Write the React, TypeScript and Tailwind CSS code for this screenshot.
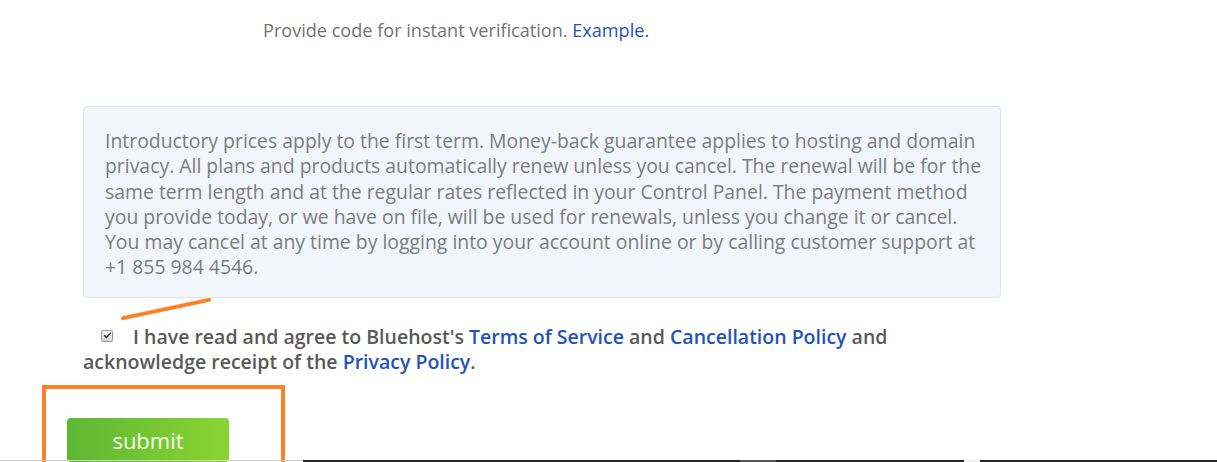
import { Check } from "lucide-react";

const link = "text-[#1f52bb]";

const terms = [
  "Introductory prices apply to the first term. Money-back guarantee applies to hosting and domain",
  "privacy. All plans and products automatically renew unless you cancel. The renewal will be for the",
  "same term length and at the regular rates reflected in your Control Panel. The payment method",
  "you provide today, or we have on file, will be used for renewals, unless you change it or cancel.",
  "You may cancel at any time by logging into your account online or by calling customer support at",
  "+1 855 984 4546.",
];

export default function App() {
  return (
    <div className="relative h-[462px] w-full overflow-hidden bg-white font-['Open_Sans',sans-serif]">
      <p className="pl-[263px] pt-[18px] text-[18.1px] leading-[24px] text-[#737373]">
        Provide code for instant verification. <span className={link}>Example.</span>
      </p>

      <div className="mt-[64px] ml-[83px] h-[192px] w-[918px] rounded-[4px] border border-[#dde3ea] bg-[#f2f6fc] px-[21px] pt-[21px]">
        <p className="whitespace-nowrap text-[19.4px] leading-[25.3px] text-[#7c7c7c]">
          {terms.map((line, i) => (
            <span key={i} className="block">
              {line}
            </span>
          ))}
        </p>
      </div>

      <p className="mt-[26px] ml-[83px] w-[830px] text-[19.5px] font-semibold leading-[25px] text-[#595959]">
        <span className="ml-[18px] mr-[20px] inline-flex h-[12px] w-[12px] translate-y-[-3px] items-center justify-center rounded-[2px] border border-[#9a9a9a] bg-gradient-to-b from-[#f4f4f4] to-[#d8d8d8] align-middle">
          <Check className="h-[9px] w-[9px] text-[#333]" strokeWidth={4} />
        </span>
        I have read and agree to Bluehost's <span className={link}>Terms of Service</span> and{" "}
        <span className={link}>Cancellation Policy</span> and acknowledge receipt of the{" "}
        <span className={link}>Privacy Policy</span>.
      </p>

      <button className="mt-[44px] ml-[67px] flex h-[44px] w-[162px] items-start justify-center rounded-[4px] bg-gradient-to-r from-[#5cb832] to-[#8ad434] pt-[7px] text-[22px] leading-[30px] text-[#f6fbe8]">
        submit
      </button>

      {/* annotation marks */}
      <div className="absolute left-[120px] top-[307px] h-[4px] w-[92px] -rotate-[12deg] rounded-full bg-[#ff7f27]" />
      <div className="absolute left-[42px] top-[385px] h-[90px] w-[243px] border-[4px] border-[#ff7f27]" />

      {/* bottom strip */}
      <div className="absolute bottom-0 left-0 flex h-[2px] w-full">
        <div className="h-[1px] w-[303px] self-start bg-[#cfcfcf]" />
        <div className="h-full w-[437px] bg-[#25252b]" />
        <div className="h-full w-[36px] bg-[#55555a]" />
        <div className="h-full w-[188px] bg-[#25252b]" />
        <div className="h-full w-[16px] bg-[#efefef]" />
        <div className="h-full flex-1 bg-[#25252b]" />
      </div>
    </div>
  );
}
